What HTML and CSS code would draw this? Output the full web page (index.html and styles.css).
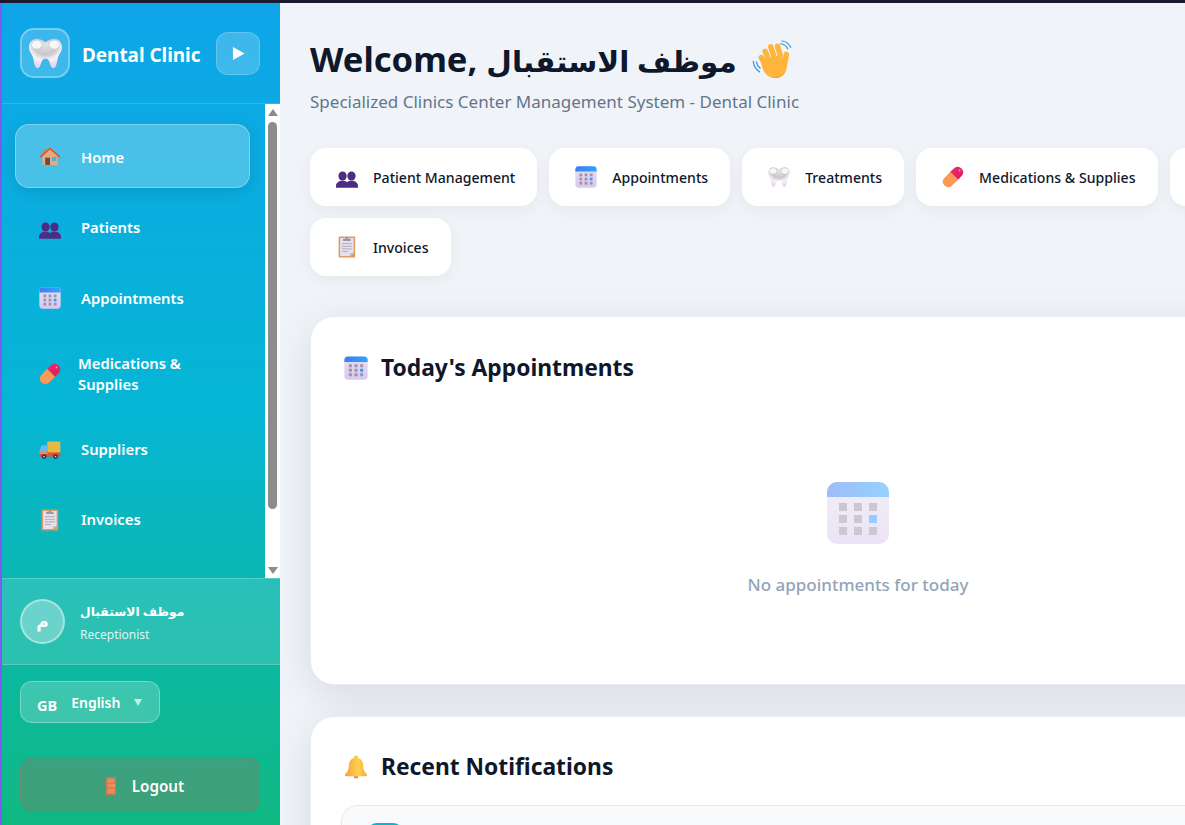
FILE: index.html
```html
<!DOCTYPE html>
<html>
<head>
    <meta charset="utf-8">
    <title>Dental Clinic</title>
    <link rel="stylesheet" href="styles.css">
</head>
<body>
    <svg class="icon-defs" xmlns="http://www.w3.org/2000/svg">
        <defs>
            <radialGradient id="toothGrad" cx="50%" cy="20%" r="85%">
                <stop offset="0" stop-color="#e4e3e6"/>
                <stop offset=".4" stop-color="#c9c7cc"/>
                <stop offset=".62" stop-color="#f6f1f8"/>
                <stop offset="1" stop-color="#e3c9ec"/>
            </radialGradient>
            <linearGradient id="calTop" x1="0" y1="0" x2="1" y2="0">
                <stop offset="0" stop-color="#3f7df0"/>
                <stop offset="1" stop-color="#2fa4ff"/>
            </linearGradient>
            <linearGradient id="calBody" x1="0" y1="0" x2="0" y2="1">
                <stop offset="0" stop-color="#e6e0ee"/>
                <stop offset="1" stop-color="#d9c8f0"/>
            </linearGradient>
            <linearGradient id="pillRed" x1="0" y1="0" x2="1" y2="1">
                <stop offset="0" stop-color="#f0286e"/>
                <stop offset="1" stop-color="#d81f5e"/>
            </linearGradient>
            <linearGradient id="bellGrad" x1="0" y1="0" x2="1" y2="0">
                <stop offset="0" stop-color="#f5a23c"/>
                <stop offset=".6" stop-color="#ffd04d"/>
                <stop offset="1" stop-color="#f7a93f"/>
            </linearGradient>
            <symbol id="i-tooth" viewBox="2 3 28 26">
                <path fill="url(#toothGrad)" d="M16 6.500C13.500 4.500 11 3.500 8.500 3.500 4.500 3.500 2 6.800 2 10.800c0 3.400 2 5.400 3 7.600 1.300 3 1.200 10.100 4.200 10.100 3.400 0 2.300-8.300 6.800-8.300s3.400 8.300 6.800 8.300c3 0 2.900-7.100 4.200-10.100 1-2.200 3-4.200 3-7.600 0-4-2.500-7.300-6.500-7.300-2.500 0-5 1-7.500 3z"/>
                <ellipse cx="8.500" cy="8.500" rx="4" ry="3.500" fill="#ffffff" opacity=".85"/>
                <ellipse cx="23.500" cy="8.500" rx="4" ry="3.500" fill="#ffffff" opacity=".85"/>
            </symbol>
            <symbol id="i-home" viewBox="0 0 32 32">
                <rect x="5.500" y="4" width="4" height="8" fill="#c58f63"/>
                <path fill="#e6ab7c" d="M5 14 16 4l11 10v14H5z"/>
                <path fill="none" stroke="#e8523a" stroke-width="2.600" stroke-linecap="round" stroke-linejoin="round" d="M2.500 15.500 16 3.500l13.500 12"/>
                <rect x="9" y="17" width="7" height="11" fill="#6d4a44"/>
                <rect x="19" y="16" width="6" height="6" fill="#3fb4ef"/>
                <rect x="2.500" y="27.500" width="27" height="1.800" fill="#7cc35b"/>
            </symbol>
            <symbol id="i-people" viewBox="0 -3 32 32">
                <g fill="#4d2c85">
                    <ellipse cx="9.500" cy="11.500" rx="6" ry="6.500"/>
                    <ellipse cx="22.500" cy="11.500" rx="6" ry="6.500"/>
                    <path d="M0 28.500V26c0-4.500 4-7.500 9.500-7.500 3 0 5 .8 6.500 2.200 1.500-1.400 3.500-2.200 6.500-2.200 5.500 0 9.500 3 9.500 7.500v2.500z"/>
                </g>
            </symbol>
            <symbol id="i-calendar" viewBox="0 0 32 32">
                <rect x=".5" y=".5" width="31" height="31" rx="5" fill="url(#calBody)"/>
                <path fill="url(#calTop)" d="M.5 8V5.500a5 5 0 0 1 5-5h21a5 5 0 0 1 5 5V8z"/>
                <g fill="#9b93a8">
                    <rect x="6.500" y="11" width="4" height="4"/><rect x="14" y="11" width="4" height="4"/><rect x="21.500" y="11" width="4" height="4"/>
                    <rect x="6.500" y="17" width="4" height="4"/><rect x="14" y="17" width="4" height="4"/>
                    <rect x="6.500" y="23" width="4" height="4"/><rect x="14" y="23" width="4" height="4"/><rect x="21.500" y="23" width="4" height="4"/>
                </g>
                <rect x="21.500" y="17" width="4" height="4" fill="#2f9bff"/>
            </symbol>
            <symbol id="i-pill" viewBox="0 0 32 32">
                <path fill="#fb9a55" d="M12 8.500 23.500 20 13.500 29.500a8 8 0 0 1-11-11z"/>
                <path fill="url(#pillRed)" d="M12 8.500 18.500 2.500a8 8 0 0 1 11 11L23.500 20z"/>
                <circle cx="25.500" cy="6.500" r="1.300" fill="#ff9fc0"/>
            </symbol>
            <symbol id="i-truck" viewBox="0 -2 32 32">
                <rect x="12" y="3" width="19" height="17" rx="1.500" fill="#e6b845"/>
                <path fill="#6cb6ea" d="M1 20v-5l3-6.500h9V20z"/>
                <rect x="1" y="19" width="30" height="6" fill="#ea4e2d"/>
                <rect x="1" y="19" width="11" height="2" fill="#f9a24a"/>
                <circle cx="7.500" cy="25" r="3.500" fill="#3c2a5e"/>
                <circle cx="7.500" cy="25" r="1.300" fill="#cbc6d6"/>
                <circle cx="24" cy="25" r="3.500" fill="#3c2a5e"/>
                <circle cx="24" cy="25" r="1.300" fill="#cbc6d6"/>
            </symbol>
            <symbol id="i-clipboard" viewBox="1.500 2.500 29.300 29.300">
                <rect x="5" y="3" width="22" height="28" rx="1" fill="#dd9b61"/>
                <path fill="#e7e0ee" d="M7 5h18v20l-5 4H7z"/>
                <path fill="#c9bdd1" d="M25 25h-5v4z"/>
                <path fill="#9d95a5" d="M11 6h3l2-3 2 3h3v3H11z"/>
                <g fill="#b3abbb">
                    <rect x="9.500" y="12" width="13" height="1.300"/><rect x="9.500" y="15.500" width="13" height="1.300"/><rect x="9.500" y="19" width="13" height="1.300"/><rect x="9.500" y="22.500" width="8" height="1.300"/>
                </g>
            </symbol>
            <symbol id="i-wave" viewBox="0 0 32 32">
                <g fill="none" stroke="#3b96dc" stroke-width="1" stroke-linecap="round">
                    <path d="M23 3c2.500.3 4.500 1.800 5.500 4"/>
                    <path d="M24 .8c3 .3 5.500 2 7 5"/>
                    <path d="M1 17c.3 3.500 2 6.500 5 8.500"/>
                    <path d="M3.500 17.500c.3 2 1.300 3.800 3 5"/>
                </g>
                <g fill="none" stroke="#ffb53a" stroke-width="4.400" stroke-linecap="round">
                    <path d="M10 19 7.500 14"/>
                    <path d="M13 15 10.500 9"/>
                    <path d="M17.500 13 15 5.500"/>
                    <path d="M22.500 12 20.500 5"/>
                    <path d="M26 20 27.500 11.500"/>
                </g>
                <path fill="#ffb53a" d="M8 17c2-3 15-6 17-3 3 4 3.500 8 2 11-2 4.500-7 6.500-11.500 5C10 28 7 22 8 17z"/>
                <path fill="#f59a2f" d="M27 25c-2 4.500-7 6.500-11.500 5 4.500.2 9-1.500 11.500-5z"/>
            </symbol>
            <symbol id="i-bell" viewBox="2 1.500 28 30">
                <path fill="url(#bellGrad)" d="M16 2a2.500 2.500 0 0 1 2.400 3.200C23 6.300 25 10 25 15c0 5 1.500 7.500 4.500 10.500.8 1 .2 2.500-1.200 2.500H3.700c-1.400 0-2-1.500-1.200-2.500C5.500 22.500 7 20 7 15c0-5 2-8.700 6.600-9.800A2.500 2.500 0 0 1 16 2z"/>
                <path fill="#f0823c" d="M13 28h6a3 3 0 0 1-6 0z"/>
            </symbol>
            <symbol id="i-door" viewBox="0 0 18 32">
                <rect x="0" y="0" width="18" height="32" fill="#d07a4e"/>
                <g fill="#e0915f">
                    <rect x="3" y="3" width="12" height="7"/><rect x="3" y="12" width="12" height="7"/><rect x="3" y="21" width="12" height="8"/>
                </g>
                <rect x="13" y="14" width="4" height="1.500" fill="#f5c04d"/>
            </symbol>
        </defs>
    </svg>

    <div class="app">
        <aside class="sidebar">
            <div class="sidebar-header">
                <div class="logo"><svg class="icon-logo"><use href="#i-tooth"/></svg></div>
                <span class="brand">Dental Clinic</span>
                <div class="toggle">
                    <svg class="toggle-arrow" viewBox="0 0 14 14"><path fill="#fff" d="M1 0 13.500 7 1 14z"/></svg>
                </div>
            </div>

            <div class="nav-wrap">
                <nav class="nav">
                    <a class="nav-item active"><svg class="nav-icon"><use href="#i-home"/></svg><span>Home</span></a>
                    <a class="nav-item"><svg class="nav-icon"><use href="#i-people"/></svg><span>Patients</span></a>
                    <a class="nav-item"><svg class="nav-icon"><use href="#i-calendar"/></svg><span>Appointments</span></a>
                    <a class="nav-item wrapped"><svg class="nav-icon"><use href="#i-pill"/></svg><span>Medications &amp;<br>Supplies</span></a>
                    <a class="nav-item"><svg class="nav-icon"><use href="#i-truck"/></svg><span>Suppliers</span></a>
                    <a class="nav-item"><svg class="nav-icon"><use href="#i-clipboard"/></svg><span>Invoices</span></a>
                </nav>
                <div class="scrollbar">
                    <div class="scroll-up"></div>
                    <div class="scroll-thumb"></div>
                    <div class="scroll-down"></div>
                </div>
            </div>

            <div class="user-box">
                <div class="avatar">م</div>
                <div class="user-info">
                    <div class="user-name">موظف الاستقبال</div>
                    <div class="user-role">Receptionist</div>
                </div>
            </div>

            <div class="sidebar-footer">
                <div class="lang">
                    <span class="lang-code">GB</span>
                    <span class="lang-name">English</span>
                    <span class="lang-arrow"></span>
                </div>
                <a class="logout"><svg class="logout-icon"><use href="#i-door"/></svg><span>Logout</span></a>
            </div>
        </aside>

        <main class="main">
            <h1 class="welcome"><span>Welcome, <span class="welcome-name">موظف الاستقبال</span></span><svg class="wave"><use href="#i-wave"/></svg></h1>
            <p class="subtitle">Specialized Clinics Center Management System - Dental Clinic</p>

            <div class="actions">
                <a class="action"><svg class="action-icon"><use href="#i-people"/></svg><span>Patient Management</span></a>
                <a class="action"><svg class="action-icon"><use href="#i-calendar"/></svg><span>Appointments</span></a>
                <a class="action"><svg class="action-icon"><use href="#i-tooth"/></svg><span>Treatments</span></a>
                <a class="action"><svg class="action-icon"><use href="#i-pill"/></svg><span>Medications &amp; Supplies</span></a>
                <a class="action"><svg class="action-icon"><use href="#i-truck"/></svg><span>Suppliers</span></a>
                <a class="action"><svg class="action-icon"><use href="#i-clipboard"/></svg><span>Invoices</span></a>
            </div>

            <section class="card card-appointments">
                <h2 class="card-title"><svg class="title-icon"><use href="#i-calendar"/></svg>Today's Appointments</h2>
                <div class="empty">
                    <svg class="empty-icon"><use href="#i-calendar"/></svg>
                    <p class="empty-text">No appointments for today</p>
                </div>
            </section>

            <section class="card card-notifications">
                <h2 class="card-title"><svg class="title-icon"><use href="#i-bell"/></svg>Recent Notifications</h2>
                <div class="notice">
                    <div class="notice-icon"></div>
                </div>
            </section>
        </main>
    </div>
</body>
</html>
```

FILE: styles.css
```css
html, body {
    margin: 0;
    height: 825px;
    overflow: hidden;
}
body {
    font-family: "Noto Sans", "DejaVu Sans", sans-serif;
    background: #f0f4f9;
    color: #0f172a;
    border-top: 3px solid #1a1a2e;
    box-sizing: border-box;
}
.icon-defs {
    width: 0;
    height: 0;
    display: block;
}
.app {
    display: flex;
    width: 1185px;
    height: 822px;
    overflow: hidden;
}

/* sidebar */
.sidebar {
    width: 280px;
    flex: none;
    display: flex;
    flex-direction: column;
    box-sizing: border-box;
    border-left: 2px solid #7c5cf0;
    background: linear-gradient(180deg, #0ea5e9 0%, #06b6d4 50%, #10b981 100%);
    color: #fff;
}
.sidebar-header {
    height: 101px;
    flex: none;
    box-sizing: border-box;
    display: flex;
    align-items: center;
    padding: 0 20px 0 18px;
    gap: 12px;
    border-bottom: 1px solid rgba(255,255,255,.15);
}
.logo {
    width: 50px;
    height: 50px;
    flex: none;
    box-sizing: border-box;
    border: 2px solid rgba(255,255,255,.3);
    border-radius: 14px;
    background: rgba(255,255,255,.2);
    display: flex;
    align-items: center;
    justify-content: center;
}
.icon-logo {
    width: 33px;
    height: 31px;
}
.brand {
    font-size: 18.9px;
    font-weight: 700;
    line-height: 28px;
    padding-top: 4px;
    white-space: nowrap;
    flex: 1;
}
.toggle {
    width: 44px;
    height: 43px;
    flex: none;
    box-sizing: border-box;
    border: 1px solid rgba(255,255,255,.2);
    border-radius: 12px;
    background: rgba(255,255,255,.2);
    display: flex;
    align-items: center;
    justify-content: center;
}
.toggle-arrow {
    width: 13px;
    height: 13px;
}

.nav-wrap {
    flex: 1;
    min-height: 0;
    display: flex;
    overflow: hidden;
}
.nav {
    flex: 1;
    display: flex;
    flex-direction: column;
    gap: 6.6px;
    padding: 20px 15px 0 13px;
}
.nav-item {
    display: flex;
    align-items: center;
    box-sizing: border-box;
    min-height: 64px;
    padding: 16px 22px 14px 23px;
    border: 1px solid transparent;
    border-radius: 14px;
    font-size: 14.8px;
    font-weight: 600;
    line-height: 21px;
    white-space: nowrap;
}
.nav-item.active {
    background: rgba(255,255,255,.25);
    border-color: rgba(255,255,255,.3);
    box-shadow: 0 4px 15px rgba(0,0,0,.1);
}
.nav-item.wrapped {
    min-height: 74px;
}
.nav-item.wrapped .nav-icon {
    margin-right: 17px;
}
.nav-icon {
    width: 22px;
    height: 22px;
    flex: none;
    margin-right: 20px;
}
.scrollbar {
    width: 15px;
    flex: none;
    background: #fff;
    display: flex;
    flex-direction: column;
    align-items: center;
}
.scroll-up, .scroll-down {
    width: 0;
    height: 0;
    border-left: 5px solid transparent;
    border-right: 5px solid transparent;
}
.scroll-up {
    margin-top: 5px;
    border-bottom: 7px solid #8c8c8c;
}
.scroll-thumb {
    width: 9px;
    height: 387px;
    margin-top: 6px;
    border-radius: 5px;
    background: #8c8c8c;
}
.scroll-down {
    margin-top: 58px;
    border-top: 7px solid #8c8c8c;
}

.user-box {
    height: 87px;
    flex: none;
    box-sizing: border-box;
    display: flex;
    align-items: center;
    gap: 15px;
    padding: 0 18px;
    background: rgba(255,255,255,.13);
    border-top: 1px solid rgba(255,255,255,.2);
    border-bottom: 1px solid rgba(255,255,255,.2);
}
.avatar {
    width: 45px;
    height: 45px;
    box-sizing: border-box;
    border: 2px solid rgba(255,255,255,.4);
    border-radius: 50%;
    background: rgba(255,255,255,.3);
    display: flex;
    align-items: center;
    justify-content: center;
    font-size: 17px;
    font-weight: 700;
}
.user-info {
    padding-top: 2px;
}
.user-name {
    font-size: 12.3px;
    font-weight: 700;
    line-height: 20px;
}
.user-role {
    font-size: 12px;
    line-height: 18px;
    margin-top: 4px;
    opacity: .85;
}

.sidebar-footer {
    height: 160px;
    flex: none;
    box-sizing: border-box;
    display: flex;
    flex-direction: column;
    align-items: flex-start;
    gap: 34px;
    padding: 16px 18px 0;
}
.lang {
    width: 140px;
    height: 42px;
    box-sizing: border-box;
    display: flex;
    align-items: center;
    padding: 0 16px;
    border: 1px solid rgba(255,255,255,.3);
    border-radius: 12px;
    background: rgba(255,255,255,.2);
}
.lang-code {
    font-size: 14.5px;
    font-weight: 700;
    margin-right: 14px;
    padding-top: 5px;
}
.lang-name {
    font-size: 14px;
    font-weight: 600;
    margin-right: 14px;
}
.lang-arrow {
    width: 0;
    height: 0;
    border-left: 4px solid transparent;
    border-right: 4px solid transparent;
    border-top: 7px solid rgba(255,255,255,.7);
}
.logout {
    width: 240px;
    height: 55px;
    box-sizing: border-box;
    display: flex;
    align-items: center;
    justify-content: center;
    gap: 16px;
    padding: 2px 0 0 10px;
    border: 1px solid rgba(239,68,68,.3);
    border-radius: 14px;
    background: rgba(239,68,68,.2);
    font-size: 15.2px;
    font-weight: 600;
}
.logout-icon {
    width: 10px;
    height: 18px;
}

/* main column */
.main {
    width: 1156px;
    flex: none;
    box-sizing: border-box;
    padding: 30px 30px 0;
}
.welcome {
    margin: 0;
    font-size: 34.6px;
    font-weight: 700;
    line-height: 52px;
    white-space: nowrap;
    display: flex;
    align-items: center;
    gap: 15px;
}
.welcome-name {
    font-size: 29.5px;
}
.wave {
    width: 40px;
    height: 40px;
}
.subtitle {
    margin: 2px 0 0;
    font-size: 17px;
    line-height: 25px;
    color: #64748b;
}
.actions {
    display: flex;
    flex-wrap: wrap;
    gap: 12px;
    margin-top: 34px;
}
.action {
    height: 58px;
    box-sizing: border-box;
    display: flex;
    align-items: center;
    gap: 15px;
    padding: 0 22px 0 26px;
    border-radius: 16px;
    background: #fff;
    box-shadow: 0 4px 15px rgba(0,0,0,.05);
    font-size: 14.1px;
    font-weight: 500;
    white-space: nowrap;
}
.action-icon {
    width: 22px;
    height: 22px;
    flex: none;
}
.card {
    padding: 34px 30px;
    border: 1px solid #e8edf3;
    border-radius: 24px;
    background: #fff;
    box-shadow: 0 10px 40px rgba(0,0,0,.1);
}
.card-appointments {
    height: 369px;
    box-sizing: border-box;
    margin-top: 40px;
    padding-top: 35px;
}
.card-notifications {
    margin-top: 31px;
}
.card-title {
    margin: 0;
    display: flex;
    align-items: center;
    gap: 13px;
    padding-left: 3px;
    font-size: 22.8px;
    font-weight: 700;
    line-height: 32px;
}
.title-icon {
    width: 24px;
    height: 24px;
    flex: none;
}
.empty {
    display: flex;
    flex-direction: column;
    align-items: center;
    margin-top: 97px;
}
.empty-icon {
    width: 64px;
    height: 64px;
    opacity: .5;
}
.empty-text {
    margin: 27px 0 0;
    font-size: 17px;
    font-weight: 500;
    line-height: 26px;
    color: #94a3b8;
}
.notice {
    height: 120px;
    margin-top: 22px;
    padding: 17px 25px;
    border: 1px solid #e2e8f0;
    border-radius: 16px;
    background: #f8fafc;
}
.notice-icon {
    width: 36px;
    height: 36px;
    border-radius: 10px;
    background: #06b6d4;
}
```
